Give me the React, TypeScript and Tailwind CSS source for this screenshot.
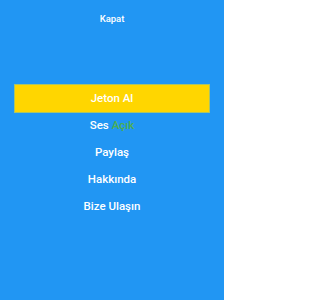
import React from "react";

export default function App() {
  const items = ["Paylaş", "Hakkında", "Bize Ulaşın"];
  return (
    <div
      className="w-[224px] h-[300px] bg-[#2196f3] flex flex-col items-center text-white"
      style={{ fontFamily: "Roboto, 'Liberation Sans', sans-serif" }}
    >
      <div className="h-[84px] w-full flex justify-center pt-[12px]">
        <span className="text-[9.5px] font-medium leading-[14px]">Kapat</span>
      </div>
      <div className="w-[196px] h-[29px] bg-[#ffd600] border border-[#a7c46a] flex items-center justify-center text-[11.5px] font-medium">
        Jeton Al
      </div>
      <div className="h-[26px] flex items-center justify-center text-[11.5px] font-medium">
        Ses&nbsp;<span className="text-[#4caf50]">Açık</span>
      </div>
      {items.map((t) => (
        <div key={t} className="h-[27px] flex items-center justify-center text-[11.5px] font-medium">
          {t}
        </div>
      ))}
    </div>
  );
}
